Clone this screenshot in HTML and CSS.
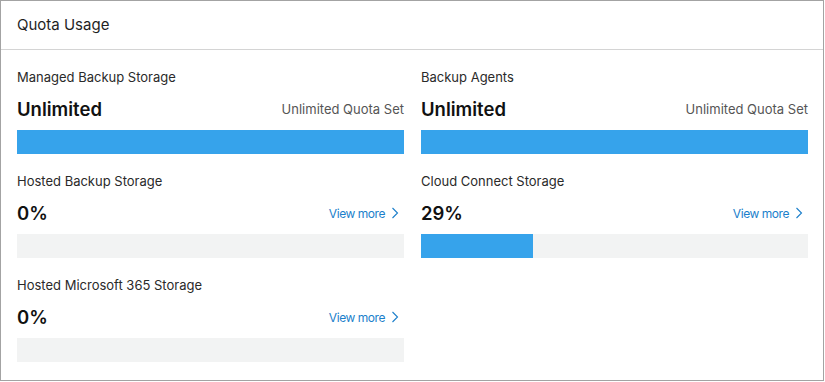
FILE: index.html
```html
<!DOCTYPE html>
<html lang="en">
<head>
  <meta charset="UTF-8">
  <title>Quota Usage</title>
  <link rel="stylesheet" href="styles.css">
</head>
<body>

  <div class="panel">
    <div class="panel-header">Quota Usage</div>

    <div class="quota-grid">
      <div class="quota">
        <div class="quota-label">Managed Backup Storage</div>
        <div class="quota-row">
          <span class="quota-value">Unlimited</span>
          <span class="quota-note">Unlimited Quota Set</span>
        </div>
        <div class="bar"><div class="bar-fill" style="width: 100%"></div></div>
      </div>

      <div class="quota">
        <div class="quota-label">Backup Agents</div>
        <div class="quota-row">
          <span class="quota-value">Unlimited</span>
          <span class="quota-note">Unlimited Quota Set</span>
        </div>
        <div class="bar"><div class="bar-fill" style="width: 100%"></div></div>
      </div>

      <div class="quota">
        <div class="quota-label">Hosted Backup Storage</div>
        <div class="quota-row">
          <span class="quota-value">0%</span>
          <a class="view-more" href="#">View more
            <svg width="8" height="12" viewBox="0 0 8 12"><path d="M1.5 1 L6.5 6 L1.5 11" fill="none" stroke="currentColor" stroke-width="1.1"/></svg>
          </a>
        </div>
        <div class="bar"><div class="bar-fill" style="width: 0%"></div></div>
      </div>

      <div class="quota">
        <div class="quota-label">Cloud Connect Storage</div>
        <div class="quota-row">
          <span class="quota-value">29%</span>
          <a class="view-more" href="#">View more
            <svg width="8" height="12" viewBox="0 0 8 12"><path d="M1.5 1 L6.5 6 L1.5 11" fill="none" stroke="currentColor" stroke-width="1.1"/></svg>
          </a>
        </div>
        <div class="bar"><div class="bar-fill" style="width: 29%"></div></div>
      </div>

      <div class="quota">
        <div class="quota-label">Hosted Microsoft 365 Storage</div>
        <div class="quota-row">
          <span class="quota-value">0%</span>
          <a class="view-more" href="#">View more
            <svg width="8" height="12" viewBox="0 0 8 12"><path d="M1.5 1 L6.5 6 L1.5 11" fill="none" stroke="currentColor" stroke-width="1.1"/></svg>
          </a>
        </div>
        <div class="bar"><div class="bar-fill" style="width: 0%"></div></div>
      </div>
    </div>
  </div>

</body>
</html>
```

FILE: styles.css
```css
body {
  margin: 0;
  font-family: Inter, "Liberation Sans", sans-serif;
  color: #1f1f1f;
  background-color: #fff;
}

.panel {
  width: 822px;
  height: 379px;
  border: 1px solid #a3a3a3;
  background-color: #fff;
}

.panel-header {
  height: 48px;
  line-height: 48px;
  padding-left: 16px;
  font-size: 15px;
  border-bottom: 1px solid #d4d4d4;
}

.quota-grid {
  display: grid;
  grid-template-columns: 387px 387px;
  column-gap: 17px;
  row-gap: 19px;
  padding: 19px 15px 0 16px;
}

.quota-label {
  font-size: 13px;
  line-height: 16px;
  color: #2a2a2a;
}

.quota-row {
  display: flex;
  justify-content: space-between;
  align-items: center;
  height: 24px;
  margin: 12px 0 9px;
}

.quota-value {
  font-size: 18.5px;
  font-weight: 600;
  color: #111;
}

.quota-note {
  font-size: 13px;
  color: #555;
}

.view-more {
  display: flex;
  align-items: center;
  gap: 6px;
  font-size: 12px;
  letter-spacing: -0.45px;
  color: #1b7fcb;
  text-decoration: none;
  padding-right: 5px;
}

.bar {
  height: 24px;
  background-color: #f2f3f3;
}

.bar-fill {
  height: 100%;
  background-color: #36a3eb;
}
```
